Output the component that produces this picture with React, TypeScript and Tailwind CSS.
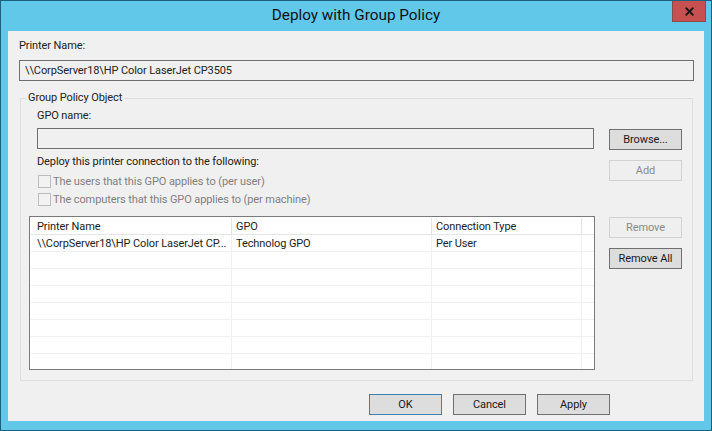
import { X } from "lucide-react";

const font = { fontFamily: 'Roboto, "Noto Sans", sans-serif' };

function Btn({ label, disabled, primary }: { label: string; disabled?: boolean; primary?: boolean }) {
  let cls = "border-[#707070] bg-[#dddddd] text-[#1a1a1a]";
  if (disabled) cls = "border-[#d2d2d2] bg-[#efefef] text-[#8a8a8a]";
  if (primary) cls = "border-[#3c7fb1] bg-[#dddddd] text-[#1a1a1a]";
  return (
    <div className={`w-[73px] h-[21px] border flex items-center justify-center leading-none ${cls}`}>
      {label}
    </div>
  );
}

function Check({ label }: { label: string }) {
  return (
    <div className="flex items-center gap-[2px] h-[13px] text-[#7f7f7f]">
      <div className="w-[13px] h-[13px] border border-[#bcbcbc] bg-[#f2f2f2]" />
      <span>{label}</span>
    </div>
  );
}

function Row({ cells, header }: { cells: string[]; header?: boolean }) {
  return (
    <div className={`flex shrink-0 border-b h-[17px] ${header ? "border-[#e5e5e5]" : "border-[#f0f0f0]"}`}>
      <div className={`w-[201px] pl-[6px] border-r whitespace-nowrap ${header ? "border-[#e3e3e3]" : "border-[#f0f0f0]"}`}>{cells[0]}</div>
      <div className={`w-[200px] pl-[4px] border-r ${header ? "border-[#e3e3e3]" : "border-[#f0f0f0]"}`}>{cells[1]}</div>
      <div className={`w-[150px] pl-[4px] border-r ${header ? "border-[#e3e3e3]" : "border-[#f0f0f0]"}`}>{cells[2]}</div>
    </div>
  );
}

export default function App() {
  return (
    <div style={font} className="w-[712px] h-[431px] bg-[#62c8ea] border border-[#1c5f7c] flex flex-col text-[11px] tracking-[-0.1px] leading-[14px] text-[#222222] overflow-hidden">
      {/* title bar */}
      <div className="relative h-[30px] shrink-0 flex items-center justify-center text-[15.3px] tracking-normal text-[#111111]">
        <span className="-mt-[2px]">Deploy with Group Policy</span>
        <div className="absolute top-[-1px] right-[5px] w-[34px] h-[22px] bg-[#c75050] border border-[#8a4a4a] flex items-center justify-center">
          <X size={13} strokeWidth={3.5} className="text-[#1a1a1a]" />
        </div>
      </div>

      <div className="flex-1 mx-[7px] mb-[9px] bg-[#f0f0f0] pl-[11px] pr-[10px] pt-[8px] flex flex-col">
        <div className="h-[14px] leading-[14px]">Printer Name:</div>
        <div className="mt-[7px] h-[21px] border border-[#707070] pl-[5px] flex items-center">
          \\CorpServer18\HP Color LaserJet CP3505
        </div>

        {/* group box */}
        <fieldset className="mt-[10px] ml-[1px] mr-[1px] h-[290px] border border-[#dedede] pl-[16px] pr-[9px] flex flex-col">
          <legend className="-ml-[11px] px-[2px] leading-[14px]">Group Policy Object</legend>
          <div className="mt-[4px]">GPO name:</div>
          <div className="mt-[5px] flex gap-[15px] items-start">
            <div className="w-[557px] h-[21px] border border-[#707070]" />
            <div className="mt-[1px]">
              <Btn label="Browse..." />
            </div>
          </div>
          <div className="flex justify-between">
            <div className="flex-1 flex flex-col">
              <div className="mt-[5px]">Deploy this printer connection to the following:</div>
              <div className="mt-[6px] ml-[1px] flex flex-col gap-[5px]">
                <Check label="The users that this GPO applies to (per user)" />
                <Check label="The computers that this GPO applies to (per machine)" />
              </div>
            </div>
            <div className="mt-[10px] mr-[1px]">
              <Btn label="Add" disabled />
            </div>
          </div>

          <div className="mt-[10px] -ml-[8px] flex gap-[14px]">
            <div className="w-[566px] h-[154px] border border-[#7a7a7a] bg-white flex flex-col overflow-hidden pt-[1px] pl-[1px] leading-[17px]">
              <Row header cells={["Printer Name", "GPO", "Connection Type"]} />
              <Row cells={["\\\\CorpServer18\\HP Color LaserJet CP...", "Technolog GPO", "Per User"]} />
              <Row cells={["", "", ""]} />
              <Row cells={["", "", ""]} />
              <Row cells={["", "", ""]} />
              <Row cells={["", "", ""]} />
              <Row cells={["", "", ""]} />
              <Row cells={["", "", ""]} />
              <div className="flex-1 flex">
                <div className="w-[201px] border-r border-[#f0f0f0]" />
                <div className="w-[200px] border-r border-[#f0f0f0]" />
                <div className="w-[150px] border-r border-[#f0f0f0]" />
              </div>
            </div>
            <div className="flex flex-col gap-[10px] pt-[1px]">
              <Btn label="Remove" disabled />
              <Btn label="Remove All" />
            </div>
          </div>
        </fieldset>

        {/* footer buttons */}
        <div className="mt-[13px] flex justify-end gap-[11px] pr-[84px]">
          <Btn label="OK" primary />
          <Btn label="Cancel" />
          <Btn label="Apply" />
        </div>
      </div>
    </div>
  );
}
